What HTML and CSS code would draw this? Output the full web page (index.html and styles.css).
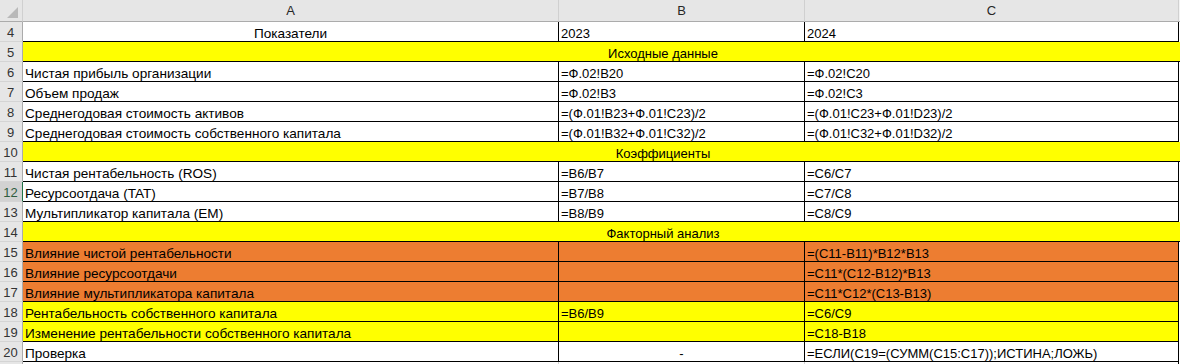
FILE: index.html
```html
<!DOCTYPE html>
<html lang="ru">
<head>
<meta charset="utf-8">
<title>Sheet</title>
<link rel="stylesheet" href="styles.css">
</head>
<body>
<div class="sheet">
  <div class="row head">
    <div class="corner"><svg width="22" height="21" viewBox="0 0 22 21"><polygon points="7,18 18,18 18,7" fill="#b9b9b9"/></svg></div>
    <div class="colh">A</div>
    <div class="colh">B</div>
    <div class="colh">C</div>
    <div class="colh tail"></div>
  </div>

  <div class="row">
    <div class="rh">4</div>
    <div class="c lbl center">Показатели</div>
    <div class="c">2023</div>
    <div class="c">2024</div>
    <div class="x"></div>
  </div>
  <div class="row">
    <div class="rh">5</div>
    <div class="c sec yellow">Исходные данные</div>
  </div>
  <div class="row">
    <div class="rh">6</div>
    <div class="c lbl">Чистая прибыль организации</div>
    <div class="c">=Ф.02!B20</div>
    <div class="c">=Ф.02!C20</div>
    <div class="x"></div>
  </div>
  <div class="row">
    <div class="rh">7</div>
    <div class="c lbl">Объем продаж</div>
    <div class="c">=Ф.02!B3</div>
    <div class="c">=Ф.02!C3</div>
    <div class="x"></div>
  </div>
  <div class="row">
    <div class="rh">8</div>
    <div class="c lbl">Среднегодовая стоимость активов</div>
    <div class="c">=(Ф.01!B23+Ф.01!C23)/2</div>
    <div class="c">=(Ф.01!C23+Ф.01!D23)/2</div>
    <div class="x"></div>
  </div>
  <div class="row">
    <div class="rh">9</div>
    <div class="c lbl">Среднегодовая стоимость собственного капитала</div>
    <div class="c">=(Ф.01!B32+Ф.01!C32)/2</div>
    <div class="c">=(Ф.01!C32+Ф.01!D32)/2</div>
    <div class="x"></div>
  </div>
  <div class="row">
    <div class="rh">10</div>
    <div class="c sec yellow">Коэффициенты</div>
  </div>
  <div class="row">
    <div class="rh">11</div>
    <div class="c lbl">Чистая рентабельность (ROS)</div>
    <div class="c">=B6/B7</div>
    <div class="c">=C6/C7</div>
    <div class="x"></div>
  </div>
  <div class="row">
    <div class="rh sel">12</div>
    <div class="c lbl">Ресурсоотдача (TAT)</div>
    <div class="c">=B7/B8</div>
    <div class="c">=C7/C8</div>
    <div class="x"></div>
  </div>
  <div class="row">
    <div class="rh">13</div>
    <div class="c lbl">Мультипликатор капитала (EM)</div>
    <div class="c">=B8/B9</div>
    <div class="c">=C8/C9</div>
    <div class="x"></div>
  </div>
  <div class="row">
    <div class="rh">14</div>
    <div class="c sec yellow">Факторный анализ</div>
  </div>
  <div class="row">
    <div class="rh">15</div>
    <div class="c lbl orange">Влияние чистой рентабельности</div>
    <div class="c orange"></div>
    <div class="c orange">=(C11-B11)*B12*B13</div>
    <div class="x"></div>
  </div>
  <div class="row">
    <div class="rh">16</div>
    <div class="c lbl orange">Влияние ресурсоотдачи</div>
    <div class="c orange"></div>
    <div class="c orange">=C11*(C12-B12)*B13</div>
    <div class="x"></div>
  </div>
  <div class="row">
    <div class="rh">17</div>
    <div class="c lbl orange">Влияние мультипликатора капитала</div>
    <div class="c orange"></div>
    <div class="c orange">=C11*C12*(C13-B13)</div>
    <div class="x"></div>
  </div>
  <div class="row">
    <div class="rh">18</div>
    <div class="c lbl yellow">Рентабельность собственного капитала</div>
    <div class="c yellow">=B6/B9</div>
    <div class="c yellow">=C6/C9</div>
    <div class="x"></div>
  </div>
  <div class="row">
    <div class="rh">19</div>
    <div class="c lbl yellow">Изменение рентабельности собственного капитала</div>
    <div class="c yellow"></div>
    <div class="c yellow">=C18-B18</div>
    <div class="x"></div>
  </div>
  <div class="row">
    <div class="rh">20</div>
    <div class="c lbl">Проверка</div>
    <div class="c center">-</div>
    <div class="c">=ЕСЛИ(C19=(СУММ(C15:C17));ИСТИНА;ЛОЖЬ)</div>
    <div class="x"></div>
  </div>
  <div class="row">
    <div class="rh"></div>
    <div class="g"></div>
    <div class="g"></div>
    <div class="g last"></div>
    <div class="x"></div>
  </div>
</div>
</body>
</html>
```

FILE: styles.css
```css
html, body {
  margin: 0;
  padding: 0;
  background: #ffffff;
}
body {
  font-family: "Liberation Sans", Arial, sans-serif;
  font-size: 13px;
  color: #000;
  width: 1180px;
  height: 364px;
  overflow: hidden;
}
.sheet {
  display: flex;
  flex-direction: column;
}
.row {
  display: grid;
  grid-template-columns: 23px 536px 246px 374px 1px;
  height: 20px;
}
.row.head {
  height: 22px;
}
.corner {
  background: #e6e6e6;
  border-right: 1px solid #d0d0d0;
  border-bottom: 1px solid #ababab;
  box-sizing: border-box;
}
.corner svg {
  display: block;
}
.colh {
  background: #e6e6e6;
  border-right: 1px solid #d0d0d0;
  border-bottom: 1px solid #ababab;
  box-sizing: border-box;
  text-align: center;
  line-height: 21px;
  color: #262626;
}
.colh.tail {
  border-right: none;
  background: #f3f3f3;
}
.rh {
  background: #e6e6e6;
  border-right: 1px solid #ababab;
  border-bottom: 1px solid #d4d4d4;
  box-sizing: border-box;
  text-align: center;
  color: #333;
  line-height: 15px;
  padding-top: 3px;
  padding-right: 1px;
}
.rh.sel {
  background: #d2d2d2;
  color: #2f5d3f;
  border-right: 1px solid #217346;
}
.c {
  box-sizing: border-box;
  border-right: 1px solid #000;
  border-bottom: 1px solid #000;
  padding: 4px 2px 0 2px;
  line-height: 15px;
  white-space: nowrap;
  overflow: hidden;
}
.c.lbl {
  font-size: 13.6px;
}
.c.center {
  text-align: center;
}
.c.sec {
  grid-column: 2 / 6;
  border-right: none;
  text-align: center;
  padding-left: 125px;
}
.yellow {
  background: #ffff00;
}
.orange {
  background: #ed7d31;
}
.g {
  box-sizing: border-box;
  border-right: 1px solid #d4d4d4;
}
.g.last {
  border-right: 1px solid #000;
}
.x {
  background: #ffffff;
}
```
